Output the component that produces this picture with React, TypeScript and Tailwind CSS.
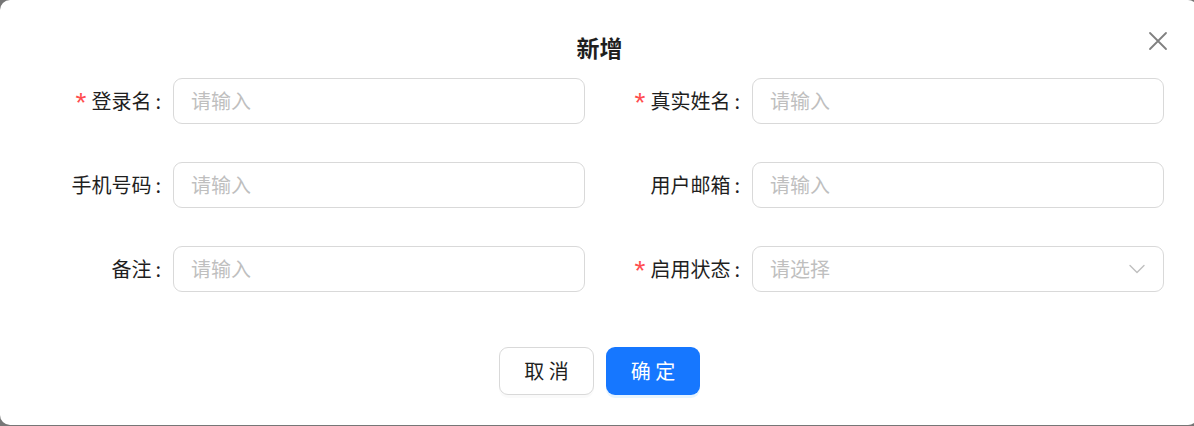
const FONT = "font-['Noto_Sans_CJK_SC','Noto_Sans',sans-serif]";

interface FieldDef {
  label: string;
  required?: boolean;
  kind: "input" | "select";
  placeholder: string;
}

// order matches the two-column grid: left, right, left, right...
const FIELDS: FieldDef[] = [
  { label: "登录名", required: true, kind: "input", placeholder: "请输入" },
  { label: "真实姓名", required: true, kind: "input", placeholder: "请输入" },
  { label: "手机号码", kind: "input", placeholder: "请输入" },
  { label: "用户邮箱", kind: "input", placeholder: "请输入" },
  { label: "备注", kind: "input", placeholder: "请输入" },
  { label: "启用状态", required: true, kind: "select", placeholder: "请选择" },
];

function FormItem({ field }: { field: FieldDef }) {
  return (
    <div className="flex h-[46px] items-center">
      <label className="flex w-[143px] shrink-0 items-center justify-end text-[20px] leading-none text-[#1f1f1f]">
        {field.required && (
          <span className="relative top-[2px] mr-[5px] font-['Liberation_Sans',sans-serif] text-[28px] leading-none text-[#ff4d4f]">
            *
          </span>
        )}
        <span>{field.label}</span>
        <span className="ml-[4px] mr-[12px]">:</span>
      </label>
      <div className="relative flex h-[46px] flex-1 items-center rounded-[9px] border border-[#d9d9d9] bg-white px-[17px]">
        <span className="text-[20px] leading-none text-[#bfbfbf]">
          {field.placeholder}
        </span>
        {field.kind === "select" && (
          <svg
            className="absolute right-[18px] top-[17px]"
            width="16"
            height="10"
            viewBox="0 0 16 10"
            fill="none"
          >
            <path
              d="M1 1.5 L8 8.5 L15 1.5"
              stroke="#bfbfbf"
              strokeWidth="1.4"
              strokeLinecap="round"
              strokeLinejoin="round"
            />
          </svg>
        )}
      </div>
    </div>
  );
}

export default function App() {
  return (
    <div className={`h-[426px] w-[1194px] overflow-hidden bg-[#767676] ${FONT}`}>
      <div className="relative h-[425px] w-[1198px] rounded-[10px] bg-white">
        <button
          aria-label="关闭"
          className="absolute left-[1147px] top-[30px] flex h-[22px] w-[22px] items-center justify-center"
        >
          <svg width="20" height="20" viewBox="0 0 20 20" fill="none">
            <path
              d="M2 2 L18 18 M18 2 L2 18"
              stroke="#808080"
              strokeWidth="1.8"
              strokeLinecap="round"
            />
          </svg>
        </button>

        <h1 className="w-[1199px] pt-[33px] text-center text-[23px] font-bold leading-[28px] text-[#1f1f1f]">
          新增
        </h1>

        <div className="mt-[17px] grid w-[1194px] grid-cols-2 gap-x-[24px] gap-y-[38px] px-[30px]">
          {FIELDS.map((field) => (
            <FormItem key={field.label} field={field} />
          ))}
        </div>

        <div className="mt-[55px] flex w-[1199px] justify-center gap-[12px]">
          <button className="flex h-[48px] w-[95px] items-center justify-center rounded-[9px] border border-[#d9d9d9] bg-white text-[20px] text-[#1f1f1f] shadow-[0_3px_0_rgba(0,0,0,0.02)]">
            取&nbsp;消
          </button>
          <button className="flex h-[48px] w-[94px] items-center justify-center rounded-[9px] bg-[#1677ff] text-[20px] text-white shadow-[0_3px_0_rgba(5,145,255,0.1)]">
            确&nbsp;定
          </button>
        </div>
      </div>
    </div>
  );
}
